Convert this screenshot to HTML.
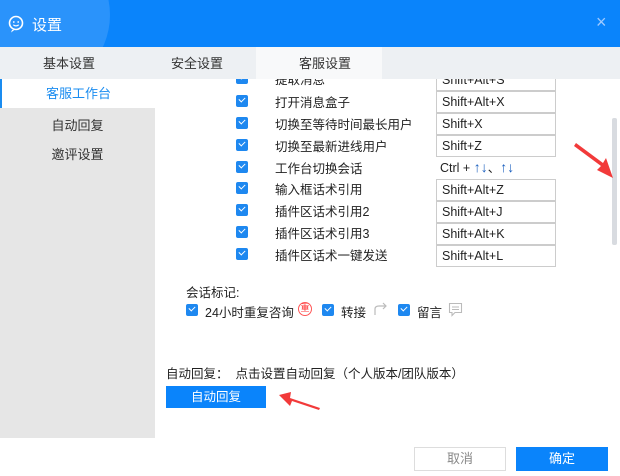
<!DOCTYPE html>
<html><head><meta charset="utf-8"><style>
*{margin:0;padding:0;box-sizing:border-box}
body{width:620px;height:476px;position:relative;overflow:hidden;background:#fff;font-family:"Liberation Sans","Noto Sans CJK SC",sans-serif;font-size:12px;color:#222}
.abs{position:absolute}
.title{left:0;top:0;width:620px;height:47px;background:#0a84fb;overflow:hidden}
.tabs{left:0;top:47px;width:620px;height:32px;background:#edf0f3}
.tab{position:absolute;top:0;height:32px;line-height:34px;text-align:center;font-size:13px;color:#333}
.side{left:0;top:79px;width:155px;height:359px;background:#e6e6e6}
.si{position:absolute;left:0;width:155px;text-align:center;font-size:13px;color:#333}
.cb{position:absolute;width:12px;height:12px;background:#1e88f0;border-radius:2px}
.cb:after{content:"";position:absolute;left:3px;top:2px;width:5px;height:3px;border-left:1.5px solid #fff;border-bottom:1.5px solid #fff;transform:rotate(-45deg)}
.lbl{position:absolute;left:275px;font-size:12.5px}
.box{position:absolute;left:436px;width:120px;height:22px;border:1px solid #ccc;padding-left:5px;line-height:21px;font-size:12.5px;background:#fff}
</style></head><body>
<div class="abs title">
<div class="abs" style="left:-40px;top:-60px;width:150px;height:150px;border-radius:50%;background:#2a93fb"></div>
<svg class="abs" style="left:7px;top:15px" width="18" height="18" viewBox="0 0 18 18"><circle cx="9" cy="8" r="6.5" fill="none" stroke="#fff" stroke-width="1.6"/><path d="M5 15 L4 17.5 L8 14.5" fill="#fff"/><circle cx="6.8" cy="7" r="0.9" fill="#fff"/><circle cx="11.2" cy="7" r="0.9" fill="#fff"/><path d="M6.3 9.8 Q9 12 11.7 9.8" fill="none" stroke="#fff" stroke-width="1.2"/></svg>
<div class="abs" style="left:32px;top:14px;color:#fff;font-size:15px">设置</div>
<div class="abs" style="left:596px;top:12px;color:#9fcaff;font-size:18px">×</div>
</div>
<div class="abs tabs">
<div class="tab" style="left:9px;width:120px">基本设置</div>
<div class="tab" style="left:150px;width:94px">安全设置</div>
<div class="tab" style="left:256px;width:126px;background:#f8f9fa;padding-left:12px">客服设置</div>
</div>
<div class="abs side">
<div class="si" style="top:0;height:29px;line-height:29px;background:#fff;color:#1a8cf0;border-left:2px solid #1a8cf0">客服工作台</div>
<div class="si" style="top:36px">自动回复</div>
<div class="si" style="top:65px">邀评设置</div>
</div>
<div class="abs" style="left:612px;top:118px;width:5px;height:127px;background:#d8dbe0;border-radius:2px"></div>
<div class="abs" style="left:155px;top:79px;width:455px;height:200px;overflow:hidden">
<div style="position:absolute;left:-155px;top:-79px;width:620px;height:300px">
<div class="cb" style="left:236px;top:72px"></div><div class="lbl" style="top:69px">提取消息</div><div class="box" style="top:69px">Shift+Alt+S</div>
<div class="cb" style="left:236px;top:95px"></div><div class="lbl" style="top:92px">打开消息盒子</div><div class="box" style="top:91px">Shift+Alt+X</div>
<div class="cb" style="left:236px;top:117px"></div><div class="lbl" style="top:114px">切换至等待时间最长用户</div><div class="box" style="top:113px">Shift+X</div>
<div class="cb" style="left:236px;top:139px"></div><div class="lbl" style="top:136px">切换至最新进线用户</div><div class="box" style="top:135px">Shift+Z</div>
<div class="cb" style="left:236px;top:161px"></div><div class="lbl" style="top:158px">工作台切换会话</div><div class="abs" style="left:440px;top:157px;font-size:12.5px">Ctrl + <span style="font-size:14px;color:#1a5fbf">↑↓</span>、<span style="font-size:14px;color:#1a5fbf">↑↓</span></div>
<div class="cb" style="left:236px;top:182px"></div><div class="lbl" style="top:179px">输入框话术引用</div><div class="box" style="top:179px">Shift+Alt+Z</div>
<div class="cb" style="left:236px;top:204px"></div><div class="lbl" style="top:201px">插件区话术引用2</div><div class="box" style="top:201px">Shift+Alt+J</div>
<div class="cb" style="left:236px;top:226px"></div><div class="lbl" style="top:223px">插件区话术引用3</div><div class="box" style="top:223px">Shift+Alt+K</div>
<div class="cb" style="left:236px;top:248px"></div><div class="lbl" style="top:245px">插件区话术一键发送</div><div class="box" style="top:245px">Shift+Alt+L</div>
</div></div>
<div class="abs" style="left:186px;top:282px;font-size:12.5px">会话标记:</div>
<div class="cb" style="left:186px;top:304px"></div><div class="abs" style="left:205px;top:302px;font-size:12.5px">24小时重复咨询</div>
<div class="abs" style="left:298px;top:302px;width:14px;height:14px;border-radius:50%;border:1.5px solid #f55;color:#f33;font-size:9px;line-height:11px;text-align:center">重</div>
<div class="cb" style="left:322px;top:304px"></div><div class="abs" style="left:341px;top:302px;font-size:12.5px">转接</div>
<svg class="abs" style="left:373px;top:302px" width="16" height="14"><path d="M2 13 V7 Q2 4 6 4 H13 M10 1 L13 4 L10 7" fill="none" stroke="#bbb" stroke-width="1.2"/></svg>
<div class="cb" style="left:398px;top:304px"></div><div class="abs" style="left:417px;top:302px;font-size:12.5px">留言</div>
<svg class="abs" style="left:448px;top:302px" width="15" height="15"><path d="M1.5 1.5 H13.5 V10.5 H7 L4 13.5 V10.5 H1.5 Z M4 5 H11 M4 7.5 H11" fill="none" stroke="#bbb" stroke-width="1.1"/></svg>
<div class="abs" style="left:166px;top:363px;font-size:12.5px">自动回复：&nbsp;&nbsp;点击设置自动回复（个人版本/团队版本）</div>
<div class="abs" style="left:166px;top:386px;width:100px;height:22px;background:#0a84fb;color:#fff;text-align:center;line-height:22px;font-size:12.5px">自动回复</div>
<div class="abs" style="left:414px;top:447px;width:92px;height:24px;border:1px solid #ddd;color:#888;text-align:center;line-height:22px;font-size:13px">取消</div>
<div class="abs" style="left:516px;top:447px;width:92px;height:24px;background:#0a84fb;color:#fff;text-align:center;line-height:24px;font-size:13px">确定</div>
<svg class="abs" style="left:0;top:0" width="620" height="476">
<polygon points="576,143 603,163 606,158 613,178 597,170 601,166 574,146" fill="#f23a3a"/>
<polygon points="320,408 290,398 291,392 279,395 290,406 292,401 319,410" fill="#f23a3a"/>
</svg>
</body></html>
